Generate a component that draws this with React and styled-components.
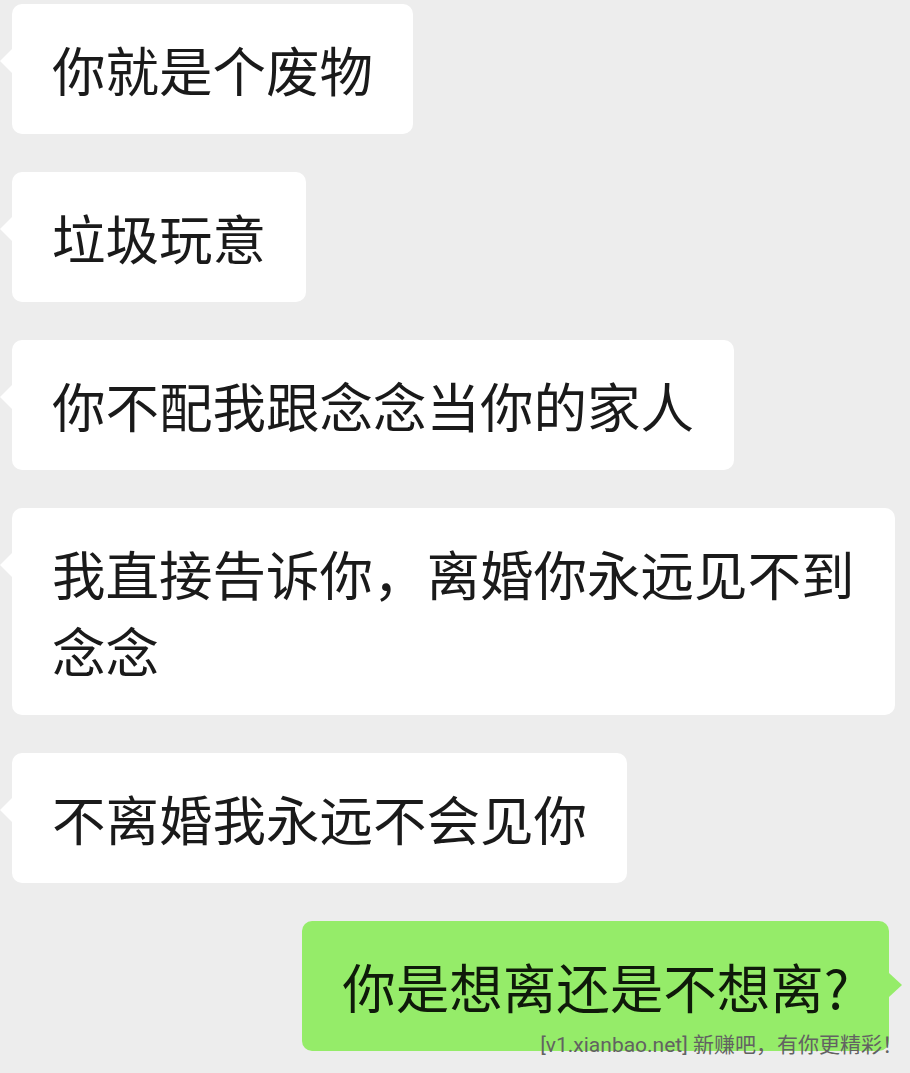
import React from "react";
import styled, { createGlobalStyle } from "styled-components";

const GlobalStyle = createGlobalStyle`
  html, body {
    margin: 0;
    padding: 0;
    background: #ededed;
  }
  body {
    font-family: "Noto Sans CJK SC", "Noto Sans", sans-serif;
  }
`;

const Chat = styled.div`
  position: relative;
  width: 910px;
  height: 1073px;
  overflow: hidden;
  background: #ededed;
  box-sizing: border-box;
  padding: 4px 21px 0 12px;
  display: flex;
  flex-direction: column;
  gap: 38px;
`;

const Bubble = styled.div`
  position: relative;
  align-self: ${(p) => (p.$mine ? "flex-end" : "flex-start")};
  box-sizing: border-box;
  padding: 26px 40px 27px 40px;
  border-radius: 10px;
  background: ${(p) => (p.$mine ? "#95ec69" : "#ffffff")};
  color: ${(p) => (p.$mine ? "#0f1a0a" : "#1a1a1a")};
  font-size: 53.5px;
  line-height: 77px;

  &::before {
    content: "";
    position: absolute;
    top: ${(p) => (p.$mine ? "52px" : "45px")};
    ${(p) => (p.$mine ? "right: -13px;" : "left: -12px;")}
    width: 0;
    height: 0;
    border-top: 12px solid transparent;
    border-bottom: 12px solid transparent;
    ${(p) =>
      p.$mine
        ? "border-left: 13px solid #95ec69;"
        : "border-right: 12px solid #ffffff;"}
  }
`;

const Line = styled.span`
  display: block;
  white-space: nowrap;
`;

const Watermark = styled.div`
  position: absolute;
  right: 7px;
  top: 1032px;
  font-family: "Roboto", "Noto Sans CJK SC", sans-serif;
  font-size: 21px;
  line-height: 26px;
  color: #626262;
  white-space: nowrap;
`;

const messages = [
  { lines: ["你就是个废物"] },
  { lines: ["垃圾玩意"] },
  { lines: ["你不配我跟念念当你的家人"] },
  { lines: ["我直接告诉你，离婚你永远见不到", "念念"] },
  { lines: ["不离婚我永远不会见你"] },
  { lines: ["你是想离还是不想离?"], mine: true },
];

export default function App() {
  return (
    <>
      <GlobalStyle />
      <Chat>
        {messages.map((m, i) => (
          <Bubble key={i} $mine={m.mine}>
            {m.lines.map((l, j) => (
              <Line key={j}>{l}</Line>
            ))}
          </Bubble>
        ))}
        <Watermark>[v1.xianbao.net] 新赚吧，有你更精彩！</Watermark>
      </Chat>
    </>
  );
}
